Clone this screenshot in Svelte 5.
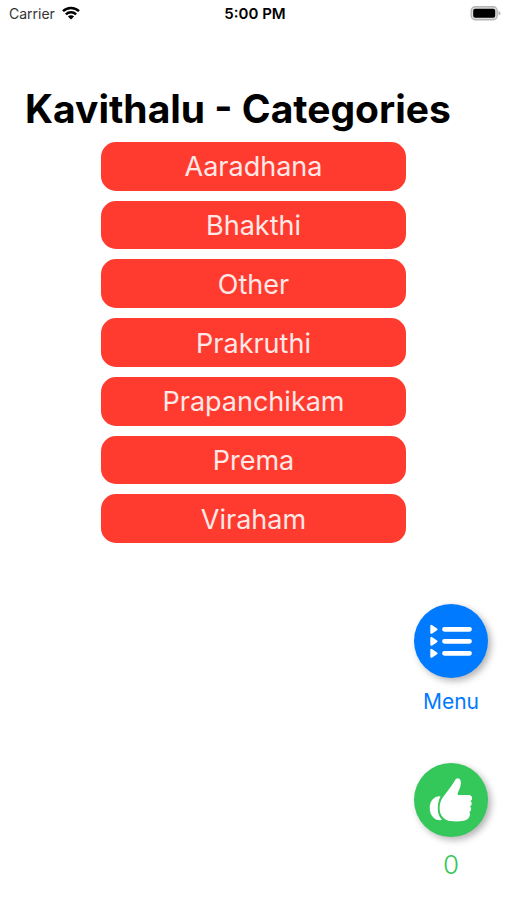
<script>
	// PRIVATE ATTRIBUTES
	const categories = ['Aaradhana', 'Bhakthi', 'Other', 'Prakruthi', 'Prapanchikam', 'Prema', 'Viraham'];
	let likes = 0;

	// METHODS
	function onLike() {
		likes += 1;
	}
</script>

<div class="screen">
	<header class="status-bar">
		<div class="carrier">
			<span>Carrier</span>
			<svg width="18" height="14" viewBox="0 0 18 14" aria-hidden="true">
				<g fill="none" stroke="#000" stroke-width="2.5">
					<path d="M1 5.2a11.4 11.4 0 0 1 16 0" />
					<path d="M3.9 8.3a7.3 7.3 0 0 1 10.2 0" />
				</g>
				<path d="M9 13.6 5.9 10.5a4.4 4.4 0 0 1 6.2 0z" />
			</svg>
		</div>
		<time>5:00 PM</time>
		<svg class="battery" width="32" height="16" viewBox="0 0 32 16" aria-hidden="true">
			<rect x="2.2" y="1.7" width="26" height="13" rx="4" fill="#ddd" stroke="#b5b5b5" stroke-width="1.4" />
			<rect x="4.2" y="3.7" width="22" height="9" rx="2" />
			<path d="M29.500 5.800q2 .6 2 2.400t-2 2.400z" fill="#b5b5b5" />
		</svg>
	</header>

	<main>
		<h1>Kavithalu - Categories</h1>
		<nav class="categories">
			{#each categories as category}
				<button type="button">{category}</button>
			{/each}
		</nav>
	</main>

	<aside class="actions">
		<button type="button" class="action menu">
			<span class="circle">
				<svg width="74" height="74" viewBox="0 0 74 74" aria-hidden="true">
					<g fill="#fff" stroke="#fff" stroke-width="2" stroke-linejoin="round">
						<path d="M17.300 21.800v7l5.200-3.500z" />
						<path d="M17.300 33.800v7l5.200-3.500z" />
						<path d="M17.300 45.800v7l5.200-3.500z" />
					</g>
					<path d="M30.500 25.300h25M30.500 37.300h25M30.500 49.300h25" stroke="#fff" stroke-width="4.800" stroke-linecap="round" />
				</svg>
			</span>
			<span class="label">Menu</span>
		</button>
		<button type="button" class="action like" aria-label="Like, {likes}" on:click={onLike}>
			<span class="circle">
				<svg width="74" height="74" viewBox="0 0 74 74" fill="#fff" aria-hidden="true">
					<path d="M26.5 33.4c-6.2-.5-10.8 4.5-10.8 11.6 0 7.3 4.7 12.4 10.4 12.3l1.8-.6c-3-3.2-4.2-7-4.1-11.7.1-4.7 1-8.4 2.7-11.600z" />
					<path d="M40.3 18.500c1.300-2.300 2.600-3.600 4.300-3 1.900.6 2.500 2.700 2.200 5.400-.4 4-2.300 6.600-3.100 9.500-.3 1.300.2 1.700 1.500 1.700h9.300c2.500 0 3.600 1.300 3.600 3.100 0 1.500-.8 2.300-1.900 2.900 1.100.5 1.500 1.400 1.500 2.500 0 1.600-.8 2.500-1.900 3 1 .6 1.400 1.500 1.300 2.600-.1 1.500-.9 2.400-2 2.800.7.600 1 1.400.9 2.400-.3 3.400-2.700 5.700-6.400 6.400-3.900.7-8.900.9-13 .3-6.700-1-10.900-5.700-11-12.700-.1-4.200 1.100-8.300 3.800-11.900 3.600-4.900 7.500-9.300 10.900-15z" />
				</svg>
			</span>
			<span class="count">{likes}</span>
		</button>
	</aside>
</div>

<style>
	:global(body) {
		margin: 0;
		background: #fff;
	}
	.screen {
		font-family: Inter, "Liberation Sans", sans-serif;
		color: #000;
	}
	button {
		margin: 0;
		padding: 0;
		border: 0;
		font-family: inherit;
		cursor: pointer;
	}
	svg {
		display: block;
	}
	.status-bar {
		display: grid;
		grid-template-columns: 1fr auto 1fr;
		align-items: center;
		height: 26px;
		padding: 0 6px 0 9px;
		font-size: 14px;
	}
	.carrier {
		display: flex;
		align-items: center;
		gap: 7px;
		color: #333;
	}
	time {
		font-size: 15px;
		font-weight: 600;
	}
	.battery {
		justify-self: end;
	}
	h1 {
		margin: 0;
		padding: 58px 25px 8px;
		font-size: 39px;
		font-weight: 700;
		line-height: 50px;
		white-space: nowrap;
	}
	.categories {
		display: flex;
		flex-direction: column;
		gap: 10px;
		min-height: 401px;
		margin: 0 20%;
	}
	.categories button {
		flex: 1;
		padding-top: 2px;
		border-radius: 15px;
		background: #ff3b30;
		color: #ffe9e7;
		font-size: 27px;
		line-height: 46px;
	}
	.actions {
		display: flex;
		flex-direction: column;
		align-items: flex-end;
		gap: 46px;
		padding: 61px 19px 16px;
	}
	.action {
		display: flex;
		flex-direction: column;
		align-items: center;
		gap: 8px;
		background: none;
	}
	.circle {
		border-radius: 50%;
		box-shadow: 3px 3px 7px rgba(0, 0, 0, 0.3);
	}
	.menu .circle {
		background: #007aff;
	}
	.like .circle {
		background: #34c759;
	}
	.label,
	.count {
		line-height: 31px;
	}
	.label {
		color: #007aff;
		font-size: 21px;
	}
	.count {
		padding-top: 4px;
		color: #34c759;
		font-size: 26px;
		font-weight: 300;
	}
</style>
